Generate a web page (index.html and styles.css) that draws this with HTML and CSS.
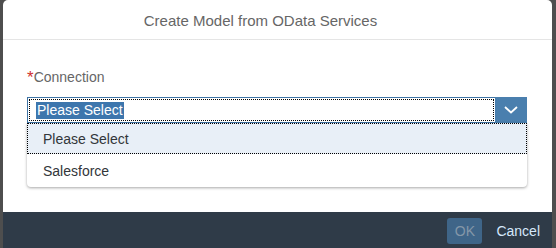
FILE: index.html
```html
<!DOCTYPE html>
<html>
<head>
<meta charset="utf-8">
<link rel="stylesheet" href="styles.css">
</head>
<body>
<div class="dialog">
  <div class="header">Create Model from OData Services</div>
  <div class="content">
    <div class="label"><span class="req">*</span>Connection</div>
    <div class="select-wrap">
      <div class="select">
        <div class="field"><span class="sel-text">Please Select</span></div>
        <div class="arrow">
          <svg width="14" height="8" viewBox="0 0 14 8"><path d="M1 1 L7 6.5 L13 1" fill="none" stroke="#fff" stroke-width="1.8"/></svg>
        </div>
      </div>
      <ul class="list">
        <li class="item active">Please Select</li>
        <li class="item">Salesforce</li>
      </ul>
    </div>
  </div>
  <div class="footer">
    <span class="btn ok">OK</span>
    <span class="btn cancel">Cancel</span>
  </div>
</div>
</body>
</html>
```
FILE: styles.css
```css
html, body {
  margin: 0;
  padding: 0;
}
body {
  width: 556px;
  height: 248px;
  overflow: hidden;
  background: #4e4e4e;
  font-family: "Liberation Sans", Arial, sans-serif;
}
.dialog {
  margin-left: 3px;
  width: 549px;
  height: 248px;
  background: #fff;
  border-radius: 5px 5px 0 0;
  display: flex;
  flex-direction: column;
}
.header {
  height: 39px;
  line-height: 41px;
  border-bottom: 1px solid #e5e5e5;
  text-align: center;
  font-size: 15px;
  color: #666;
  padding-right: 34px;
  overflow: hidden;
}
.content {
  height: 172px;
  padding: 28px 0 0 24px;
  box-sizing: border-box;
}
.label {
  font-size: 14px;
  color: #666;
  height: 29px;
}
.req {
  color: #d0302f;
  font-size: 17px;
  vertical-align: -1px;
}
.select-wrap {
  position: relative;
  width: 500px;
}
.select {
  display: flex;
  height: 26px;
  border: 1px solid #3f74a5;
  box-sizing: border-box;
  background: #fff;
}
.field {
  flex: 1;
  margin: 1px;
  border: 1px dotted #000;
  padding-left: 6px;
  display: flex;
  align-items: center;
}
.sel-text {
  background: #3d76ad;
  color: #fff;
  font-size: 14px;
  line-height: 17px;
  padding: 0 1px;
}
.arrow {
  width: 32px;
  margin: -1px -1px -1px 0;
  background: #4a7fae;
  display: flex;
  align-items: center;
  justify-content: center;
}
.list {
  position: absolute;
  top: 26px;
  left: 0;
  width: 500px;
  margin: 0;
  padding: 0;
  list-style: none;
  background: #fff;
  border-radius: 0 0 4px 4px;
  box-shadow: 0 1px 3px rgba(0,0,0,0.35);
}
.item {
  height: 33px;
  padding-top: 2px;
  line-height: 31px;
  padding-left: 16px;
  font-size: 14px;
  color: #32363a;
  box-sizing: border-box;
}
.item.active {
  background: #e8eff7;
  border: 1px dotted #000;
  padding-left: 15px;
  padding-top: 0;
  height: 31px;
  line-height: 31px;
  overflow: hidden;
}
.footer {
  height: 36px;
  background: #2f3b48;
  display: flex;
  align-items: center;
  justify-content: flex-end;
  padding-right: 12px;
  gap: 14px;
}
.btn {
  font-size: 14px;
}
.ok {
  width: 35px;
  height: 26px;
  line-height: 26px;
  text-align: center;
  background: #3f6588;
  color: #8497a8;
  border-radius: 3px;
  margin-top: 2px;
}
.cancel {
  color: #d6e8fb;
  margin-top: 2px;
}
```
